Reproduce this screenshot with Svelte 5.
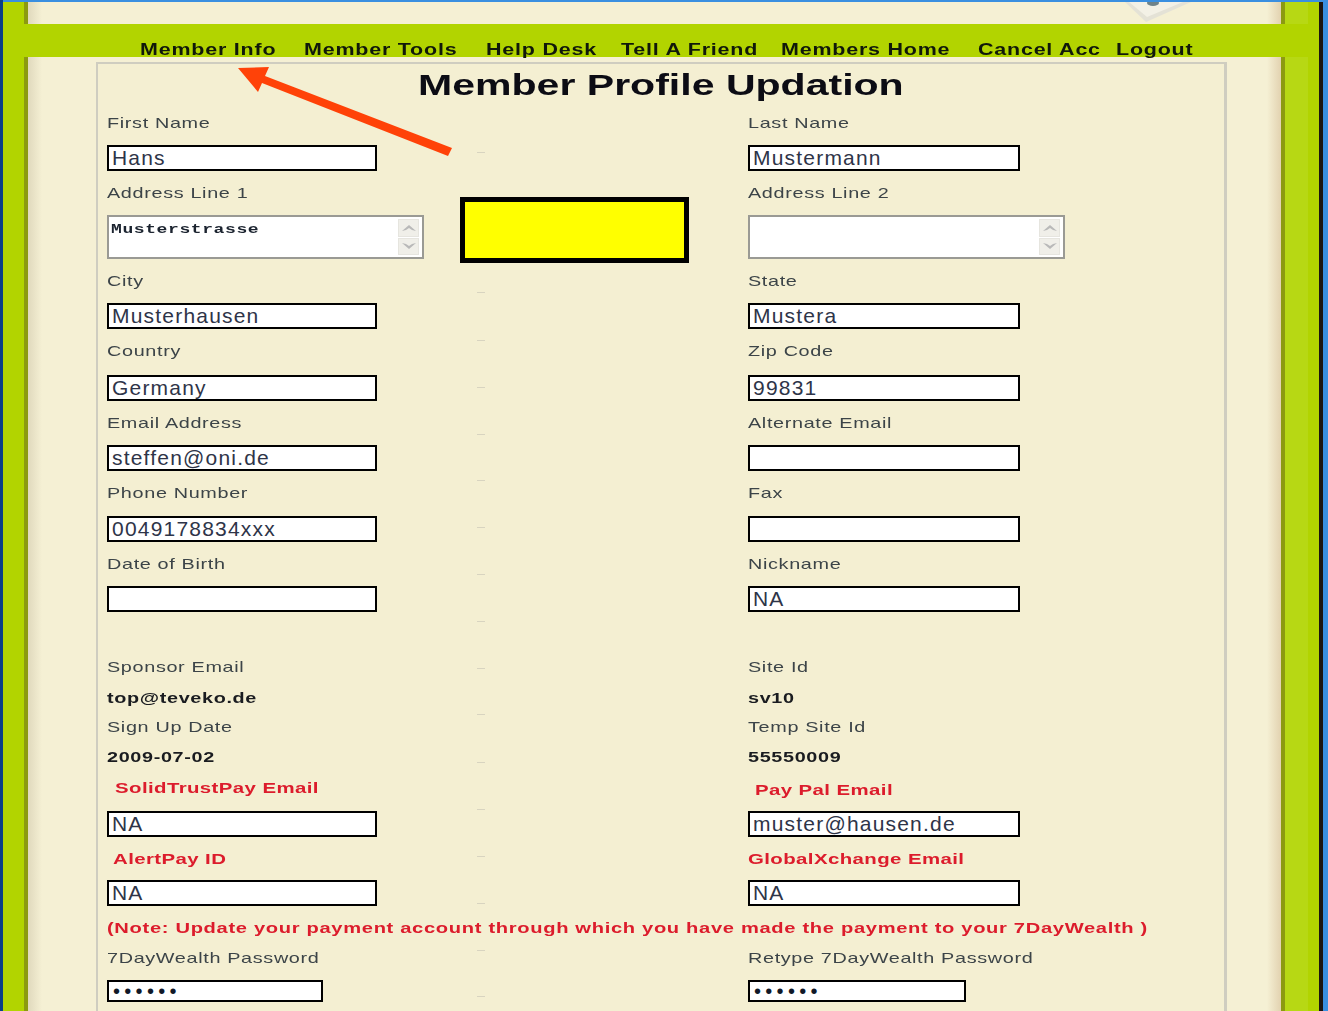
<script>
  const nav = ['Member Info', 'Member Tools', 'Help Desk', 'Tell A Friend', 'Members Home', 'Cancel Acc', 'Logout']

  // h = distance to the next row, cells are placed at the top of the row
  const rows = [
    { h: 31, left: { label: 'First Name' }, right: { label: 'Last Name' } },
    { h: 39, left: { input: 'Hans' }, right: { input: 'Mustermann' } },
    { h: 31, left: { label: 'Address Line 1' }, right: { label: 'Address Line 2' } },
    { h: 57, left: { area: 'Musterstrasse' }, right: { area: '' } },
    { h: 31, left: { label: 'City' }, right: { label: 'State' } },
    { h: 39, left: { input: 'Musterhausen' }, right: { input: 'Mustera' } },
    { h: 33, left: { label: 'Country' }, right: { label: 'Zip Code' } },
    { h: 39, left: { input: 'Germany' }, right: { input: '99831' } },
    { h: 31, left: { label: 'Email Address' }, right: { label: 'Alternate Email' } },
    { h: 39, left: { input: 'steffen@oni.de' }, right: { input: '' } },
    { h: 32, left: { label: 'Phone Number' }, right: { label: 'Fax' } },
    { h: 39, left: { input: '0049178834xxx' }, right: { input: '' } },
    { h: 31, left: { label: 'Date of Birth' }, right: { label: 'Nickname' } },
    { h: 72, left: { input: '' }, right: { input: 'NA' } },
    { h: 32, left: { label: 'Sponsor Email' }, right: { label: 'Site Id' } },
    { h: 28, left: { value: 'top@teveko.de' }, right: { value: 'sv10' } },
    { h: 31, left: { label: 'Sign Up Date' }, right: { label: 'Temp Site Id' } },
    { h: 31, left: { value: '2009-07-02' }, right: { value: '55550009' } },
    { h: 31, left: { red: 'SolidTrustPay Email', indent: 8 }, right: { red: 'Pay Pal Email', indent: 7, drop: 2 } },
    { h: 40, left: { input: 'NA' }, right: { input: 'muster@hausen.de' } },
    { h: 29, left: { red: 'AlertPay ID', indent: 6 }, right: { red: 'GlobalXchange Email' } },
    { h: 39, left: { input: 'NA' }, right: { input: 'NA' } }
  ]

  const marks = [152, 292, 340, 387, 434, 480, 527, 574, 621, 668, 714, 762, 809, 856, 903, 950, 996]
</script>

{#snippet cell(c)}
  {#if c.label}
    <div class="label"><span>{c.label}</span></div>
  {:else if c.value}
    <div class="label value"><span>{c.value}</span></div>
  {:else if c.red}
    <div class="label red" style="padding-left: {c.indent || 0}px; padding-top: {c.drop || 0}px"><span>{c.red}</span></div>
  {:else if c.area !== undefined}
    <div class="area">
      <div class="area-text"><span>{c.area}</span></div>
      <div class="scroll">
        <div class="scroll-btn">
          <svg width="18" height="10" viewBox="0 0 18 10"><path d="M2 8 L9 2 L16 8 L12 7 L9 5 L6 7 Z" fill="#b9b9b9" /></svg>
        </div>
        <div class="scroll-btn">
          <svg width="18" height="10" viewBox="0 0 18 10"><path d="M2 2 L6 3 L9 5 L12 3 L16 2 L9 8 Z" fill="#b9b9b9" /></svg>
        </div>
      </div>
    </div>
  {:else}
    <input class="field" type="text" value={c.input} aria-label="field" />
  {/if}
{/snippet}

<div class="page">
  <div class="frame">
    <div class="head-strip">
      <svg class="sheet" width="80" height="24" viewBox="0 0 80 24">
        <path d="M0 0 L21 20 L66 0 Z" fill="#e4e2d6" />
        <path d="M4 0 L22 15 L58 0 Z" fill="#f3f1e6" />
        <ellipse cx="28" cy="1" rx="6" ry="3" fill="#6f8389" />
      </svg>
    </div>

    <nav class="band">
      {#each nav as item}
        <a class="nav-item" href="#top"><span>{item}</span></a>
      {/each}
    </nav>

    <div class="body">
      <section class="panel">
        <h1><span>Member Profile Updation</span></h1>

        {#each rows as row}
          <div class="row" style="height: {row.h}px">
            <div>{@render cell(row.left)}</div>
            <div>{@render cell(row.right)}</div>
          </div>
        {/each}

        <div class="note"><span>(Note: Update your payment account through which you have made the payment to your 7DayWealth )</span></div>

        <div class="row label-row">
          <div class="label"><span>7DayWealth Password</span></div>
          <div class="label"><span>Retype 7DayWealth Password</span></div>
        </div>
        <div class="row">
          <div><input class="field pass" type="password" value="123456" aria-label="password" /></div>
          <div><input class="field pass" type="password" value="123456" aria-label="retype password" /></div>
        </div>
      </section>
    </div>
  </div>

  <!-- annotations pasted over the screenshot -->
  {#each marks as y}
    <i class="mark" style="top: {y}px"></i>
  {/each}
  <div class="redact"></div>
  <svg class="arrow" width="240" height="110" viewBox="230 60 240 110">
    <path d="M238 68 L269 67 L265 76 L452 148 L448 156 L262 83 L258 92 Z" fill="#ff4208" />
  </svg>
</div>

<style>
  :global(body) {
    margin: 0;
    background: #3a8fe0;
  }

  .page {
    position: relative;
    box-sizing: border-box;
    width: 1328px;
    height: 1011px;
    overflow: hidden;
    padding: 2px 5px 0 0;
    background: #3a8fe0;
    border-left: 3px solid #0a3f86;
    font-family: "Liberation Sans", Arial, sans-serif;
  }

  .frame {
    display: flex;
    flex-direction: column;
    height: 100%;
    box-sizing: border-box;
    padding: 0 0 0 21px;
    border-right: 4px solid #1c1410;
    background: linear-gradient(90deg, #b2d400 0 1282px, #b7d814 1282px 1305px, #b2d400 1305px);
  }

  .head-strip {
    position: relative;
    box-sizing: border-box;
    height: 22px;
    margin-right: 34px;
    border-left: 4px solid #8c9a10;
    border-right: 4px solid #8c9a10;
    background: linear-gradient(90deg, #e0d9bd 0, #f5f0d4 14px, #f5f0d4 calc(100% - 14px), #e2d2b0 100%);
    overflow: hidden;
  }

  .sheet {
    position: absolute;
    left: 1097px;
    top: 0;
    filter: blur(0.5px);
  }

  /* the links sit low in the band, descenders run over its lower edge */
  .band {
    position: relative;
    z-index: 1;
    display: grid;
    grid-template-columns: 164px 182px 135px 160px 197px 138px 77px;
    align-items: start;
    height: 33px;
    margin-left: -21px;
    padding-left: 137px;
    background: #b2d400;
  }

  .nav-item {
    display: block;
    padding-top: 17px;
    font-size: 16px;
    line-height: 18px;
    font-weight: 700;
    letter-spacing: 0.6px;
    color: #10180a;
    text-decoration: none;
    white-space: nowrap;
  }

  .nav-item span,
  h1 span,
  .label span,
  .note span,
  .area-text span {
    display: inline-block;
    transform-origin: left center;
    filter: blur(0.4px);
  }

  .nav-item span {
    transform: scaleX(1.34);
  }

  .body {
    flex: 1;
    min-height: 0;
    box-sizing: border-box;
    margin-right: 34px;
    padding: 5px 0 0 68px;
    border-left: 4px solid #8c9a10;
    border-right: 4px solid #8c9a10;
    background: linear-gradient(90deg, #e0d9bd 0, #f5f0d4 14px, #f5f0d4 calc(100% - 14px), #e2d2b0 100%);
  }

  .panel {
    box-sizing: border-box;
    width: 1131px;
    height: 100%;
    padding: 0 0 0 9px;
    border: solid #cfcdc0;
    border-width: 2px 3px 0 2px;
    background: #f4efd2;
  }

  h1 {
    box-sizing: border-box;
    height: 50px;
    margin: 0 0 0 311px;
    font-size: 30px;
    line-height: 42px;
    font-weight: 700;
    color: #0c0c14;
    white-space: nowrap;
  }

  h1 span {
    transform: scaleX(1.368);
  }

  .row {
    display: grid;
    grid-template-columns: 641px 1fr;
  }

  .label-row {
    height: 31px;
  }

  .label {
    height: 16px;
    margin-top: 1px;
    font-size: 15px;
    line-height: 16px;
    letter-spacing: 0.5px;
    color: #3c4448;
    white-space: nowrap;
  }

  .label span {
    transform: scaleX(1.32);
  }

  .value {
    margin-top: 0;
    color: #1a1c20;
    font-weight: 700;
  }

  .red {
    margin-top: 0;
    color: #dc1c2c;
    font-weight: 700;
    letter-spacing: 0.3px;
  }

  .label.red span {
    transform: scaleX(1.36);
  }

  .field {
    display: block;
    box-sizing: border-box;
    width: 270px;
    height: 26px;
    padding: 0 3px;
    border: 2px solid #000;
    border-radius: 0;
    outline: none;
    background: #fff;
    font-family: inherit;
    font-size: 21px;
    letter-spacing: 1.2px;
    color: #2e3448;
  }

  .row > div:last-child .field {
    width: 272px;
  }

  .field.pass {
    width: 216px;
    height: 22px;
    padding: 1px 4px 0;
    font-size: 20px;
    letter-spacing: 4.3px;
    color: #101828;
  }

  .row > div:last-child .field.pass {
    width: 218px;
  }

  .area {
    display: flex;
    box-sizing: border-box;
    width: 317px;
    height: 44px;
    border: 2px solid #9a9a94;
    background: #fff;
  }

  .area-text {
    flex: 1;
    padding: 6px 0 0 2px;
    font-family: "Liberation Mono", monospace;
    font-size: 12px;
    line-height: 14px;
    font-weight: 700;
    letter-spacing: 0.4px;
    color: #1c2430;
    white-space: nowrap;
  }

  .area-text span {
    transform: scaleX(1.5);
  }

  .scroll {
    display: flex;
    flex-direction: column;
    gap: 1px;
    width: 27px;
    padding: 2px 3px;
    box-sizing: border-box;
  }

  .scroll-btn {
    display: grid;
    place-items: center;
    flex: 1;
    background: #f0efe9;
    border: 1px solid #e6e5df;
  }

  .note {
    box-sizing: border-box;
    height: 30px;
    padding-top: 1px;
    font-size: 15px;
    line-height: 16px;
    font-weight: 700;
    letter-spacing: 0.5px;
    color: #dc1c2c;
    white-space: nowrap;
  }

  .note span {
    transform: scaleX(1.342);
  }

  .mark {
    position: absolute;
    left: 474px;
    width: 8px;
    height: 1px;
    background: #d8d4c0;
  }

  .redact {
    position: absolute;
    left: 457px;
    top: 197px;
    box-sizing: border-box;
    width: 229px;
    height: 66px;
    border: 5px solid #000;
    background: #ff0;
  }

  .arrow {
    position: absolute;
    left: 227px;
    top: 60px;
  }
</style>
